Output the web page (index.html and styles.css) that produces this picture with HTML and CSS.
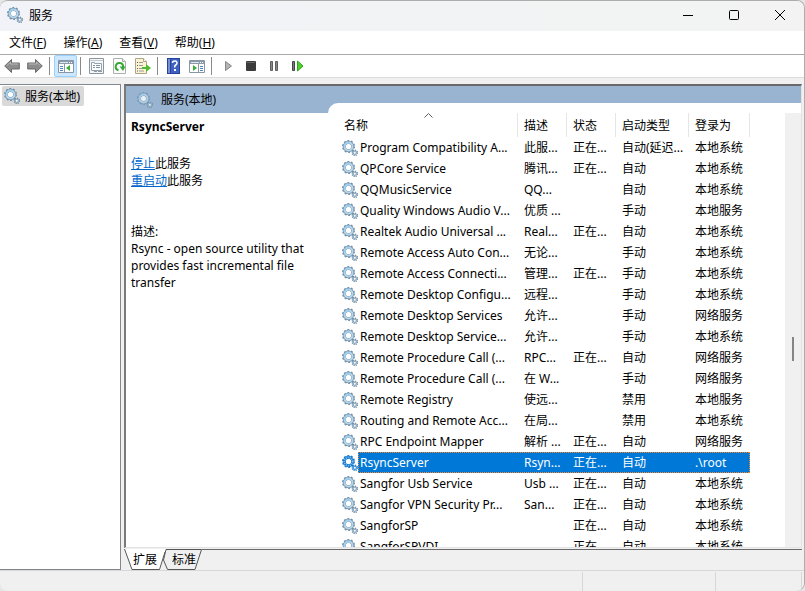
FILE: index.html
```html
<!DOCTYPE html>
<html lang="zh-CN">
<head>
    <meta charset="UTF-8">
    <meta name="viewport" content="width=device-width, initial-scale=1.0">
    <title>服务</title>
    <link rel="stylesheet" href="styles.css">
</head>
<body>
    <!-- shared icons -->
    <svg class="defs" aria-hidden="true">
        <symbol id="gear" viewBox="0 0 16 16">
            <circle cx="6.500" cy="6.500" r="5.700" fill="none" stroke="#6f8fa9" stroke-width="1.600" stroke-dasharray="1.900 1.680"/>
            <circle cx="6.500" cy="6.500" r="4.100" fill="none" stroke="#7393ae" stroke-width="3.200"/>
            <circle cx="6.500" cy="6.500" r="4" fill="none" stroke="#b9d6e9" stroke-width="2"/>
            <path d="M2.600 7.500a4 4 0 0 1 4.900-4.900" fill="none" stroke="#9fd0f0" stroke-width="1.400"/>
            <circle cx="6.500" cy="6.500" r="2.500" fill="#fff"/>
            <circle cx="12.800" cy="12.800" r="2.600" fill="none" stroke="#66849c" stroke-width="1.300" stroke-dasharray="1.100 .94"/>
            <circle cx="12.800" cy="12.800" r="1.600" fill="#fff" stroke="#8dabc1" stroke-width="1.300"/>
        </symbol>
        <symbol id="gear-selected" viewBox="0 0 16 16">
            <circle cx="6.500" cy="6.500" r="5.700" fill="none" stroke="#1b7fd0" stroke-width="1.600" stroke-dasharray="1.900 1.680"/>
            <circle cx="6.500" cy="6.500" r="4.100" fill="none" stroke="#1478cc" stroke-width="3.200"/>
            <circle cx="6.500" cy="6.500" r="4.100" fill="none" stroke="#7dbdec" stroke-width="2" stroke-dasharray="1 1"/>
            <circle cx="6.500" cy="6.500" r="2.500" fill="#fff"/>
            <circle cx="12.800" cy="12.800" r="2.600" fill="none" stroke="#1478cc" stroke-width="1.300" stroke-dasharray="1.100 .94"/>
            <circle cx="12.800" cy="12.800" r="1.600" fill="#fff" stroke="#3c93da" stroke-width="1.300"/>
        </symbol>
    </svg>

    <div class="window">
        <header class="titlebar">
            <svg class="icon"><use href="#gear"/></svg>
            <h1>服务</h1>
            <div class="window-controls">
                <button type="button" aria-label="最小化"><svg viewBox="0 0 12 12"><path d="M1 6.500h10"/></svg></button>
                <button type="button" aria-label="最大化"><svg viewBox="0 0 12 12"><rect x="1.500" y="1.500" width="9" height="9" rx="1"/></svg></button>
                <button type="button" aria-label="关闭"><svg viewBox="0 0 12 12"><path d="M1 1l10 10M11 1L1 11"/></svg></button>
            </div>
        </header>

        <nav class="menubar">
            <button type="button">文件(<u>F</u>)</button>
            <button type="button">操作(<u>A</u>)</button>
            <button type="button">查看(<u>V</u>)</button>
            <button type="button">帮助(<u>H</u>)</button>
        </nav>

        <div class="toolbar">
            <button type="button" aria-label="后退">
                <svg class="icon" viewBox="0 0 16 16"><path d="M.7 8L7.500 1.500V5h7.800v6H7.500v3.500z" fill="#8d8d8d" stroke="#696969"/><path d="M3 7.500L6.500 4v2h7.800" fill="none" stroke="#b9b9b9"/></svg>
            </button>
            <button type="button" aria-label="前进">
                <svg class="icon" viewBox="0 0 16 16"><path d="M15.300 8L8.500 1.500V5H.7v6h7.800v3.500z" fill="#8d8d8d" stroke="#696969"/><path d="M1.700 6h7.800V4L13 7.500" fill="none" stroke="#b9b9b9"/></svg>
            </button>
            <span class="separator"></span>
            <button type="button" class="active" aria-label="显示/隐藏控制台树">
                <svg class="icon" viewBox="0 0 16 16"><path d="M.5 2.500h15v12H.5z" fill="#fff" stroke="#8997a5"/><path d="M1 3h14v3H1z" fill="#8b9bab"/><path d="M2 4.500h8" stroke="#dfe6ec"/><path d="M11 4.500h1M13 4.500h1" stroke="#fff"/><path d="M6.500 6v8" stroke="#8997a5"/><path d="M2 8.500h3M2 10.500h3M2 12.500h3" stroke="#4d87be"/><path d="M12 7v6l-4-3z" fill="#39ad36"/></svg>
            </button>
            <span class="separator"></span>
            <button type="button" aria-label="属性">
                <svg class="icon" viewBox="0 0 16 16"><path d="M.5.5h14v15H.5z" fill="#f5f7f8" stroke="#8d969d"/><path d="M1 2.500h13" stroke="#c2cad0"/><path d="M2.500 4.500h3v1h7v7h-10z" fill="#fff" stroke="#94a2ae"/><path d="M4 7.500h2M4 9.500h2M7 7.500h4M7 9.500h4" stroke="#7b91a6"/><path d="M5 13.500h3M9 13.500h4" stroke="#8f9ba5"/></svg>
            </button>
            <button type="button" aria-label="刷新">
                <svg class="icon" viewBox="0 0 16 16"><path d="M1.500.5h9l3 3v12h-12z" fill="#fbfcfb" stroke="#a9b0a9"/><path d="M10.500.5v3h3" fill="#e4e8e4" stroke="#a9b0a9"/><path d="M6.500 12.200a3.700 3.700 0 1 1 4.600-3.200" fill="none" stroke="#36a934" stroke-width="2"/><path d="M7.500 8.500h6l-2.500 4.500z" fill="#36a934"/></svg>
            </button>
            <button type="button" aria-label="导出列表">
                <svg class="icon" viewBox="0 0 16 16"><path d="M.5.5h8l3 3v12H.5z" fill="#fbf4cf" stroke="#aaa58c"/><path d="M8.500.5v3h3" fill="#fff" stroke="#aaa58c"/><path d="M2 4.500h1M2 7.500h1M2 10.500h1M2 13h1" stroke="#555"/><path d="M4 4.500h4M4 7.500h4M4 10.500h4M4 13h5" stroke="#9797a6"/><path d="M7 9h4V6l5 4-5 4v-3H7z" fill="#4fba36"/></svg>
            </button>
            <span class="separator"></span>
            <button type="button" aria-label="帮助">
                <svg class="icon" viewBox="0 0 16 16"><path d="M1 0h13v16H1z" fill="#26429f"/><path d="M2 1h2v14H2z" fill="#7890cf"/><path d="M5 1h8v14H5z" fill="#3e60bf"/><path d="M6.500 5q0-2 2.300-2T11 5q0 1.200-1.300 2T8.700 9.500" fill="none" stroke="#fff" stroke-width="1.500"/><path d="M8 11h2v2H8z" fill="#fff"/></svg>
            </button>
            <button type="button" aria-label="显示/隐藏操作窗格">
                <svg class="icon" viewBox="0 0 16 16"><path d="M.5 2.500h15v12H.5z" fill="#fff" stroke="#8997a5"/><path d="M1 3h14v3H1z" fill="#8b9bab"/><path d="M2 4.500h8" stroke="#dfe6ec"/><path d="M11 4.500h1M13 4.500h1" stroke="#fff"/><path d="M9.500 6v8" stroke="#8997a5"/><path d="M11 8.500h3M11 10.500h3M11 12.500h3" stroke="#4d87be"/><path d="M4 7v6l4-3z" fill="#39ad36"/></svg>
            </button>
            <span class="separator"></span>
            <button type="button" aria-label="启动服务">
                <svg class="icon" viewBox="0 0 16 16"><path d="M5.500 3.500v9L11.500 8z" fill="#b3b3b3" stroke="#888"/></svg>
            </button>
            <button type="button" aria-label="停止服务">
                <svg class="icon" viewBox="0 0 16 16"><rect x="3" y="3" width="10" height="10" rx="1" fill="#3b3b3b"/><path d="M4 4.500h8" stroke="#666"/></svg>
            </button>
            <button type="button" aria-label="暂停服务">
                <svg class="icon" viewBox="0 0 16 16"><path d="M4.500 3.500h2v9h-2zM9.500 3.500h2v9h-2z" fill="#888" stroke="#5f5f5f"/></svg>
            </button>
            <button type="button" aria-label="重启动服务">
                <svg class="icon" viewBox="0 0 16 16"><path d="M3.500 3.500h2v9h-2z" fill="#777" stroke="#444"/><path d="M8.500 3v10l5.500-5z" fill="#4fd02d" stroke="#2da51c"/></svg>
            </button>
        </div>

        <div class="workspace">
            <aside class="tree">
                <a href="#services" class="tree-item"><svg class="icon"><use href="#gear"/></svg>服务(本地)</a>
            </aside>

            <div class="main">
                <main class="pane" id="services">
                    <div class="pane-header"><svg class="icon"><use href="#gear"/></svg>服务(本地)</div>
                    <div class="pane-body">
                        <section class="details">
                            <h2>RsyncServer</h2>
                            <p><a href="#stop">停止</a>此服务<br><a href="#restart">重启动</a>此服务</p>
                            <p class="description">描述:<br>Rsync - open source utility that provides fast incremental file transfer</p>
                        </section>

                        <section class="list">
                            <div class="list-scroll">
                                <table>
                                    <colgroup>
                                        <col class="col-name"><col class="col-desc"><col class="col-status"><col class="col-start"><col class="col-logon">
                                    </colgroup>
                                    <thead>
                                        <tr>
                                            <th>名称<svg class="sort" viewBox="0 0 9 5"><path d="M.5 4.500l4-4 4 4"/></svg></th>
                                            <th>描述</th><th>状态</th><th>启动类型</th><th>登录为</th>
                                        </tr>
                                    </thead>
                                    <tbody>
                                        <tr><td><svg class="icon"><use href="#gear"/></svg>Program Compatibility A...</td><td>此服...</td><td>正在...</td><td>自动(延迟...</td><td>本地系统</td></tr>
                                        <tr><td><svg class="icon"><use href="#gear"/></svg>QPCore Service</td><td>腾讯...</td><td>正在...</td><td>自动</td><td>本地系统</td></tr>
                                        <tr><td><svg class="icon"><use href="#gear"/></svg>QQMusicService</td><td>QQ...</td><td></td><td>自动</td><td>本地系统</td></tr>
                                        <tr><td><svg class="icon"><use href="#gear"/></svg>Quality Windows Audio V...</td><td>优质 ...</td><td></td><td>手动</td><td>本地服务</td></tr>
                                        <tr><td><svg class="icon"><use href="#gear"/></svg>Realtek Audio Universal ...</td><td>Real...</td><td>正在...</td><td>自动</td><td>本地系统</td></tr>
                                        <tr><td><svg class="icon"><use href="#gear"/></svg>Remote Access Auto Con...</td><td>无论...</td><td></td><td>手动</td><td>本地系统</td></tr>
                                        <tr><td><svg class="icon"><use href="#gear"/></svg>Remote Access Connecti...</td><td>管理...</td><td>正在...</td><td>手动</td><td>本地系统</td></tr>
                                        <tr><td><svg class="icon"><use href="#gear"/></svg>Remote Desktop Configu...</td><td>远程...</td><td></td><td>手动</td><td>本地系统</td></tr>
                                        <tr><td><svg class="icon"><use href="#gear"/></svg>Remote Desktop Services</td><td>允许...</td><td></td><td>手动</td><td>网络服务</td></tr>
                                        <tr><td><svg class="icon"><use href="#gear"/></svg>Remote Desktop Service...</td><td>允许...</td><td></td><td>手动</td><td>本地系统</td></tr>
                                        <tr><td><svg class="icon"><use href="#gear"/></svg>Remote Procedure Call (...</td><td>RPC...</td><td>正在...</td><td>自动</td><td>网络服务</td></tr>
                                        <tr><td><svg class="icon"><use href="#gear"/></svg>Remote Procedure Call (...</td><td>在 W...</td><td></td><td>手动</td><td>网络服务</td></tr>
                                        <tr><td><svg class="icon"><use href="#gear"/></svg>Remote Registry</td><td>使远...</td><td></td><td>禁用</td><td>本地服务</td></tr>
                                        <tr><td><svg class="icon"><use href="#gear"/></svg>Routing and Remote Acc...</td><td>在局...</td><td></td><td>禁用</td><td>本地系统</td></tr>
                                        <tr><td><svg class="icon"><use href="#gear"/></svg>RPC Endpoint Mapper</td><td>解析 ...</td><td>正在...</td><td>自动</td><td>网络服务</td></tr>
                                        <tr class="selected"><td><svg class="icon"><use href="#gear-selected"/></svg>RsyncServer</td><td>Rsyn...</td><td>正在...</td><td>自动</td><td>.\root</td></tr>
                                        <tr><td><svg class="icon"><use href="#gear"/></svg>Sangfor Usb Service</td><td>Usb ...</td><td>正在...</td><td>自动</td><td>本地系统</td></tr>
                                        <tr><td><svg class="icon"><use href="#gear"/></svg>Sangfor VPN Security Pr...</td><td>San...</td><td>正在...</td><td>自动</td><td>本地系统</td></tr>
                                        <tr><td><svg class="icon"><use href="#gear"/></svg>SangforSP</td><td></td><td>正在...</td><td>自动</td><td>本地系统</td></tr>
                                        <tr><td><svg class="icon"><use href="#gear"/></svg>SangforSPVDI</td><td></td><td>正在...</td><td>自动</td><td>本地系统</td></tr>
                                    </tbody>
                                </table>
                            </div>
                            <div class="scrollbar"><div class="thumb"></div></div>
                        </section>
                    </div>
                </main>

                <div class="tabs">
                    <button type="button" class="tab">
                        <svg viewBox="0 0 42 21"><path d="M0 0h42l-6 20.500H8z" fill="#fff"/><path d="M.5 0L8 20.500h27.500L41 3" fill="none" stroke="#555"/></svg>
                        <span>扩展</span>
                    </button>
                    <button type="button" class="tab">
                        <svg viewBox="0 0 42 21"><path d="M3 .5h35.500L32 20.500H4.500L.5 11z" fill="#f0f0f0" stroke="#555"/></svg>
                        <span>标准</span>
                    </button>
                    <span class="tabs-rest"></span>
                </div>
            </div>
        </div>

        <footer class="statusbar">
            <span></span>
            <span></span>
            <span></span>
        </footer>
    </div>
</body>
</html>
```

FILE: styles.css
```css
* {
    box-sizing: border-box;
}
body {
    margin: 0;
    background: #e6e6e6;
    color: #000;
    font: 12px/17px "Noto Sans", "Noto Sans CJK SC", sans-serif;
}
h1, h2, p {
    margin: 0;
    font-size: 12px;
}
button {
    padding: 0;
    border: none;
    background: none;
    color: inherit;
    font: inherit;
}
.defs {
    position: absolute;
    width: 0;
    height: 0;
}
.icon {
    flex: none;
    width: 16px;
    height: 16px;
}
.window {
    display: flex;
    flex-direction: column;
    height: 100vh;
    overflow: hidden;
    background: #f0f0f0;
    border-top: 1px solid #adadad;
    border-right: 1px solid #adadad;
    border-radius: 8px;
}

/* title bar */
.titlebar {
    display: flex;
    align-items: center;
    gap: 6px;
    height: 30px;
    padding: 0 1px 2px 7px;
    background: linear-gradient(90deg, #f1f3f9, #f2f3f3 70%, #f3f3f3);
}
.titlebar h1 {
    font-weight: normal;
}
.window-controls {
    display: flex;
    margin-left: auto;
}
.window-controls button {
    display: flex;
    align-items: center;
    justify-content: center;
    width: 46px;
    height: 28px;
}
.window-controls svg {
    width: 12px;
    height: 12px;
    fill: none;
    stroke: #000;
}

/* menu and toolbar */
.menubar {
    display: flex;
    gap: 17px;
    height: 24px;
    padding: 0 9px;
    background: #fff;
    border-bottom: 1px solid #a9a9a9;
}
.toolbar {
    display: flex;
    align-items: center;
    height: 23px;
    background: #fff;
    border-bottom: 1px solid #dcdcdc;
}
.toolbar button {
    display: flex;
    align-items: center;
    justify-content: center;
    width: 23px;
    height: 22px;
    border: 1px solid transparent;
}
.toolbar .active {
    background: #cce8ff;
    border-color: #99d1ff;
    border-radius: 2px;
}
.separator {
    width: 8px;
    height: 18px;
    padding-left: 3px;
}
.separator::before {
    content: "";
    display: block;
    width: 1px;
    height: 18px;
    background: #8a8a8a;
}

/* tree + main pane */
.workspace {
    display: flex;
    flex: 1;
    gap: 3px;
    min-height: 0;
    padding: 6px 2px 0 0;
}
.tree {
    width: 121px;
    padding: 1px 2px;
    background: #fff;
    border: 1px solid #828790;
    border-left: none;
}
.tree-item {
    display: inline-flex;
    align-items: center;
    gap: 5px;
    height: 20px;
    padding: 0 4px 0 2px;
    background: #d9d9d9;
    border-radius: 2px;
    color: #000;
    text-decoration: none;
}
.main {
    display: flex;
    flex: 1;
    flex-direction: column;
    min-width: 0;
}
.pane {
    display: flex;
    flex: 1;
    flex-direction: column;
    min-height: 0;
    background: #fff;
    border: 1px solid #696969;
    border-width: 2px 1px 1px 2px;
    border-right-color: #e3e3e3;
    border-bottom-color: #e3e3e3;
    border-left-color: #7a7a7a;
}
.pane-header {
    display: flex;
    flex: none;
    align-items: center;
    gap: 8px;
    height: 27px;
    padding-left: 11px;
    background: #99b4d1;
}
.pane-header .icon {
    opacity: 0.8;
}
.pane-body {
    display: flex;
    flex: 1;
    min-height: 0;
}
.details {
    width: 202px;
    padding: 5px 8px 0 5px;
}
.details p {
    margin-top: 20px;
}
.details .description {
    margin-top: 34px;
}
.details a {
    color: #0066cc;
}
.list {
    display: flex;
    flex: 1;
    min-width: 0;
    margin-top: -10px;
    padding: 10px 0 0 13px;
    background: #fff;
    border-top-left-radius: 10px;
}
.list-scroll {
    flex: 1;
    overflow: hidden;
}
.scrollbar {
    display: flex;
    justify-content: center;
    width: 16px;
    padding-top: 224px;
    background: #f0f0f0;
}
.thumb {
    width: 2px;
    height: 24px;
    background: #858585;
}

/* services table */
table {
    width: 409px;
    table-layout: fixed;
    border-collapse: separate;
    border-spacing: 0;
}
.col-name {
    width: 177px;
}
.col-desc, .col-status {
    width: 49px;
}
.col-start {
    width: 73px;
}
.col-logon {
    width: 61px;
}
th, td {
    overflow: hidden;
    padding: 0 0 0 6px;
    text-align: left;
    white-space: nowrap;
}
th {
    position: relative;
    height: 24px;
    border-right: 1px solid #e5e5e5;
    font-weight: normal;
}
th:first-child {
    padding-left: 3px;
}
.sort {
    position: absolute;
    top: 0;
    left: calc(50% - 5px);
    width: 9px;
    height: 5px;
    fill: none;
    stroke: #606060;
}
td {
    height: 21px;
}
td:first-child {
    padding-left: 1px;
}
td .icon {
    margin-right: 2px;
    vertical-align: middle;
}

/* selected row: blue fill with a dotted focus frame, icon stays outside */
.selected {
    --dots: repeating-linear-gradient(90deg, #ff8728 0 1px, #0078d7 1px 2px);
    --side: repeating-linear-gradient(#ff8728 0 1px, #0078d7 1px 2px);
    background:
        var(--side) 17px 0 / 1px 100% no-repeat,
        var(--side) right / 1px 100% no-repeat,
        var(--dots) 17px 0 / 100% 1px no-repeat,
        var(--dots) 17px 100% / 100% 1px no-repeat,
        linear-gradient(#0078d7, #0078d7) 17px 0 / 100% 100% no-repeat;
    color: #fff;
}

/* bottom tabs */
.tabs {
    display: flex;
    height: 22px;
}
.tab {
    position: relative;
    width: 39px;
    height: 22px;
}
.tab svg {
    position: absolute;
    top: 1px;
    left: 0;
    width: 42px;
    height: 21px;
}
.tab span {
    position: relative;
    padding-left: 3px;
}
.tabs-rest {
    flex: 1;
    margin-top: 1px;
    border-top: 1px solid #696969;
}

/* status bar */
.statusbar {
    display: flex;
    height: 21px;
    padding: 0 2px 0 0;
    border-top: 1px solid #d7d7d7;
}
.statusbar span {
    margin-top: 1px;
    border-right: 1px solid #d7d7d7;
}
.statusbar span:nth-child(1) {
    flex: 1;
}
.statusbar span:nth-child(2) {
    width: 133px;
}
.statusbar span:nth-child(3) {
    width: 86px;
}
```
